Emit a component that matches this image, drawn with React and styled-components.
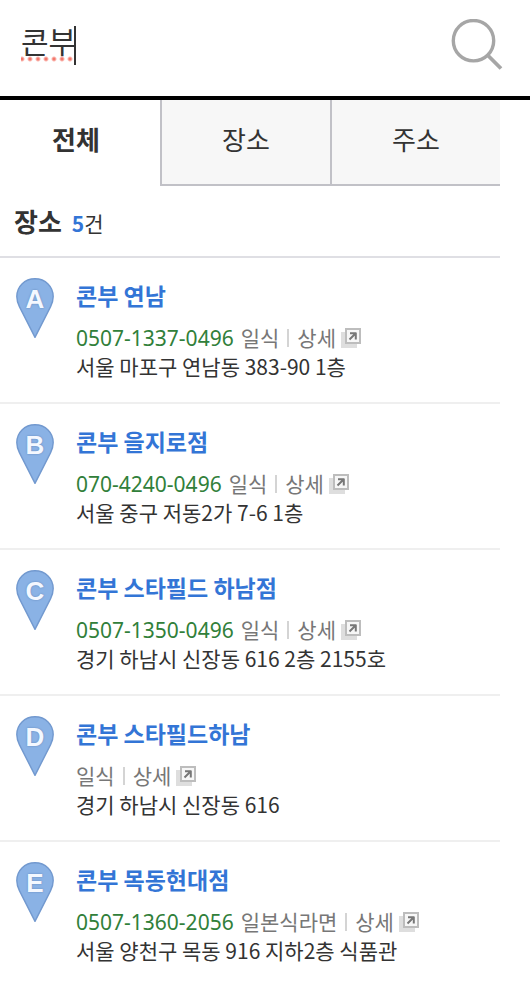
import { useState } from 'react';
import styled, { createGlobalStyle } from 'styled-components';

const tabs = ['전체', '장소', '주소'];

const places = [
  {
    mark: 'A',
    name: '콘부 연남',
    phone: '0507-1337-0496',
    category: '일식',
    address: '서울 마포구 연남동 383-90 1층',
  },
  {
    mark: 'B',
    name: '콘부 을지로점',
    phone: '070-4240-0496',
    category: '일식',
    address: '서울 중구 저동2가 7-6 1층',
  },
  {
    mark: 'C',
    name: '콘부 스타필드 하남점',
    phone: '0507-1350-0496',
    category: '일식',
    address: '경기 하남시 신장동 616 2층 2155호',
  },
  {
    mark: 'D',
    name: '콘부 스타필드하남',
    category: '일식',
    address: '경기 하남시 신장동 616',
  },
  {
    mark: 'E',
    name: '콘부 목동현대점',
    phone: '0507-1360-2056',
    category: '일본식라면',
    address: '서울 양천구 목동 916 지하2층 식품관',
  },
];

function SearchIcon() {
  return (
    <svg width="54" height="54" viewBox="0 0 54 54" fill="none" aria-hidden="true">
      <circle cx="24.5" cy="21.7" r="20.2" stroke="#a6a6a6" strokeWidth="3.4" />
      <path d="M38.500 36L52 49.500" stroke="#a6a6a6" strokeWidth="3.8" />
    </svg>
  );
}

function Pin({ mark }) {
  return (
    <PinSvg width="38" height="60" viewBox="0 0 38 60" aria-hidden="true">
      <path
        d="M19 .8C8.500 .8 .8 8.600 .8 18.600c0 3.600 1 6.800 2.600 10L19 59.400l15.600-30.800c1.600-3.200 2.600-6.400 2.600-10C37.200 8.600 29.500 .8 19 .8z"
        fill="#8ab2e5"
        stroke="#7299cf"
        strokeWidth="1.4"
      />
      <PinText x="19" y="30" textAnchor="middle">
        {mark}
      </PinText>
    </PinSvg>
  );
}

function DetailIcon() {
  return (
    <svg width="20" height="20" viewBox="0 0 20 20" fill="none" aria-hidden="true">
      <path d="M0 4h16v16H0z" fill="#dedede" />
      <path d="M5 1h14v14H5z" fill="#f7f7f7" stroke="#bdbdbd" strokeWidth="2" />
      <path d="M9 5.200h6.500M14.800 5v6.500M14.500 5.500L8.500 11.500" stroke="#777777" strokeWidth="2" />
    </svg>
  );
}

export default function App() {
  const [keyword, setKeyword] = useState('콘부');
  const [selected, setSelected] = useState('전체');

  return (
    <>
      <GlobalStyle />
      <SearchForm onSubmit={(e) => e.preventDefault()}>
        <Field>
          <SearchInput
            type="text"
            aria-label="검색어"
            spellCheck={false}
            value={keyword}
            onChange={(e) => setKeyword(e.target.value)}
          />
          <Composing aria-hidden="true" />
        </Field>
        <SearchButton type="submit" aria-label="검색">
          <SearchIcon />
        </SearchButton>
      </SearchForm>
      <Results>
        <Tabs>
          {tabs.map((tab) => (
            <Tab
              key={tab}
              type="button"
              aria-pressed={tab === selected}
              $active={tab === selected}
              onClick={() => setSelected(tab)}
            >
              {tab}
            </Tab>
          ))}
        </Tabs>
        <Heading>
          <Title>장소</Title>
          <Total>
            <strong>5</strong>건
          </Total>
        </Heading>
        <List>
          {places.map((place) => (
            <Item key={place.mark}>
              <Pin mark={place.mark} />
              <Info>
                <Name>
                  <a href="#place">{place.name}</a>
                </Name>
                <Meta>
                  {place.phone && <Phone href={`tel:${place.phone}`}>{place.phone}</Phone>}
                  <span>{place.category}</span>
                  <Divider />
                  <Detail href="#detail">
                    상세
                    <DetailIcon />
                  </Detail>
                </Meta>
                <Address>{place.address}</Address>
              </Info>
            </Item>
          ))}
        </List>
      </Results>
    </>
  );
}

const GlobalStyle = createGlobalStyle`
  * {
    box-sizing: border-box;
  }

  body {
    margin: 0;
    background-color: #ffffff;
    color: #333333;
    font-family: 'Noto Sans CJK KR', sans-serif;
    font-size: 21px;
  }

  a {
    color: inherit;
    text-decoration: none;
  }

  button,
  input {
    margin: 0;
    padding: 0;
    border: none;
    background: none;
    color: inherit;
    font-family: inherit;
  }
`;

const SearchForm = styled.form`
  display: flex;
  align-items: center;
  height: 100px;
  padding: 0 27px 4px 21px;
  border-bottom: 4px solid #000000;
`;

const Field = styled.div`
  flex: 1;
  position: relative;
`;

const SearchInput = styled.input`
  display: block;
  width: 100%;
  height: 52px;
  padding-bottom: 12px;
  font-size: 30px;
  line-height: 40px;
  outline: none;
`;

/* dotted mark and caret under the syllables being typed */
const Composing = styled.span`
  position: absolute;
  left: 0;
  top: 6px;
  width: 55px;
  height: 39px;
  border-right: 2px solid #333333;
  background: radial-gradient(circle, #f4786c 1px, transparent 3px) 5px 30px / 8px 6px repeat-x;
  pointer-events: none;
`;

const SearchButton = styled.button`
  display: flex;
  cursor: pointer;
`;

const Results = styled.main`
  margin-right: 30px;
`;

const Tabs = styled.div`
  display: flex;
  height: 86px;
`;

const Tab = styled.button`
  flex: 0 0 ${({ $active }) => ($active ? '32%' : '34%')};
  padding: ${({ $active }) => ($active ? '0 8px 8px 0' : '0 0 8px')};
  border-left: ${({ $active }) => ($active ? 'none' : '2px solid #c1c1c7')};
  border-bottom: 2px solid ${({ $active }) => ($active ? 'transparent' : '#c1c1c7')};
  background-color: ${({ $active }) => ($active ? '#ffffff' : '#f7f7f7')};
  font-size: 26px;
  font-weight: ${({ $active }) => ($active ? 700 : 400)};
  cursor: pointer;
`;

const Heading = styled.div`
  display: flex;
  align-items: baseline;
  height: 72px;
  padding: 15px 14px;
  border-bottom: 2px solid #dfdfe4;
  line-height: 40px;
`;

const Title = styled.h2`
  margin: 0 10px 0 0;
  font-size: 26px;
  font-weight: 700;
`;

const Total = styled.span`
  strong {
    color: #3375d6;
  }
`;

const List = styled.ul`
  margin: 0;
  padding: 0;
  list-style: none;
`;

const Item = styled.li`
  display: flex;
  padding: 20px 16px 21px;
  border-bottom: 2px solid #efefef;

  &:last-child {
    border-bottom: none;
  }
`;

const PinSvg = styled.svg`
  flex-shrink: 0;
  margin-right: 22px;
`;

const PinText = styled.text`
  fill: #f4f8ff;
  font-family: 'Liberation Sans', sans-serif;
  font-size: 26px;
  font-weight: 700;
  text-shadow: 0 0 2px #5f83b5;
`;

const Info = styled.div`
  flex: 1;
  line-height: 29px;
`;

const Name = styled.h3`
  margin: 0 0 11px;
  color: #3375d6;
  font-size: 23px;
  font-weight: 700;
  line-height: 34px;
`;

const Meta = styled.div`
  display: flex;
  align-items: baseline;
  height: 29px;
  color: #777777;
`;

const Phone = styled.a`
  margin-right: 7px;
  color: #31803a;
  font-family: 'Noto Sans', sans-serif;
`;

const Divider = styled.span`
  align-self: center;
  width: 2px;
  height: 18px;
  margin: 0 8px;
  background-color: #d4d4d4;
`;

const Detail = styled.a`
  display: flex;
  align-items: center;
  gap: 5px;
`;

const Address = styled.p`
  margin: 0;
`;
